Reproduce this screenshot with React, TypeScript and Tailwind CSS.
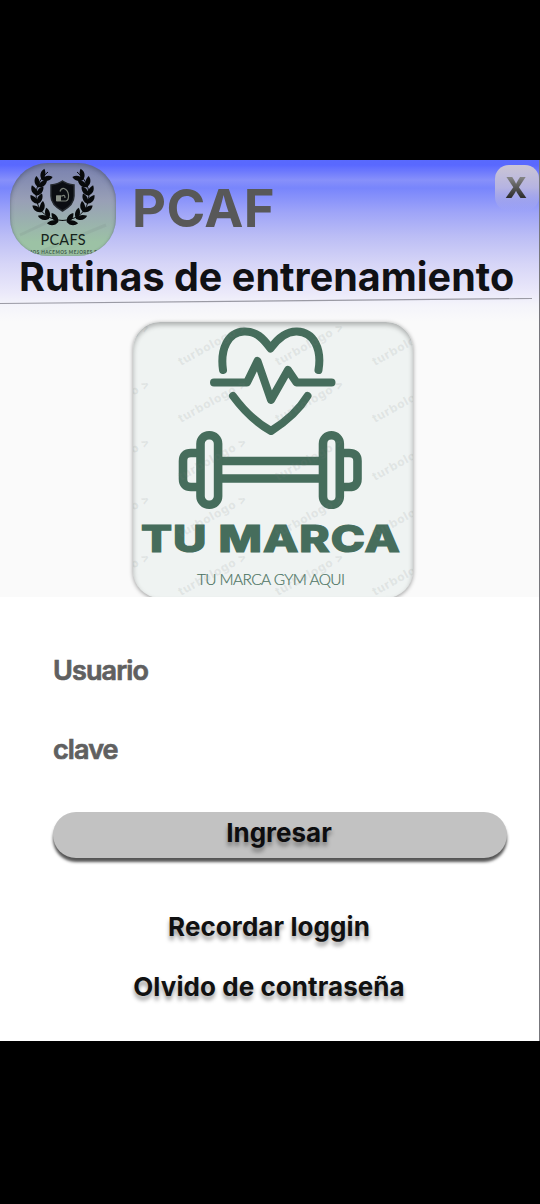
const watermarkColumns = [84, 181, 278, 375];
const watermarkRows = [366, 423, 481, 538, 596];

const leaves = [
  [34.5, 14, 42],
  [29.5, 20.5, 20],
  [27, 28.5, 4],
  [27, 37, -10],
  [30, 45.5, -26],
  [36, 53, -46],
  [44.5, 57.5, -68],
];

function Laurel() {
  return (
    <g fill="#080a0b">
      <path
        d="M38 9 C26 19 24 31 28 42 C32 52 41 57 53 57.500"
        fill="none"
        stroke="#080a0b"
        strokeWidth="1"
      />
      {leaves.map(([x, y, angle]) => (
        <g key={y} transform={`translate(${x} ${y}) rotate(${angle})`}>
          <path d="M0.500 4 C-5 3 -7 -2 -5.500 -6 C-1.500 -4 1 -1 0.500 4Z" />
          <path d="M-0.500 4 C-1 -1 2 -4.500 6 -5.500 C7 -1 4 3.500 -0.500 4Z" />
        </g>
      ))}
    </g>
  );
}

function PcafsLogo() {
  return (
    <div className="ml-[10px] mt-[3px] h-[93px] w-[106px] shrink-0 overflow-hidden rounded-[38px] bg-linear-to-b from-[#777fae] via-[#989fb6] via-40% to-[#9cc2a5] to-85% shadow-[inset_0_3px_4px_rgba(70,80,110,0.45),inset_0_0_2px_rgba(60,70,80,0.35)]">
      <svg viewBox="0 0 106 93" className="h-full w-full">
        <path d="M10 72 L40 58 M30 89 L96 62" stroke="#71827d" strokeOpacity=".15" strokeWidth="3" />
        <Laurel />
        <g transform="translate(105 0) scale(-1 1)">
          <Laurel />
        </g>
        <path
          d="M52.500 18 C49 20.500 45 21.500 41 22 V33 C41 40 47 45 52.500 48 C58 45 64 40 64 33 V22 C60 21.500 56 20.500 52.500 18Z"
          fill="#0b0d12"
          stroke="#25292e"
          strokeWidth="1.500"
        />
        <path
          d="M50 28.500 Q51 25 54 25.500 Q58 27 58.500 32 Q59 37 56 38 H47 V33 H52 Q55 31 55 35"
          fill="none"
          stroke="#7b8178"
          strokeWidth="1.200"
        />
        <path d="M46 32.500H51V38H46Z" fill="#868d84" />
        <text x="30.500" y="81.500" textLength="45" fontFamily="Lato, sans-serif" fontSize="14.500" fill="#15221b">
          PCAFS
        </text>
        <text x="16" y="91" textLength="71" fontFamily="Lato, sans-serif" fontWeight="700" fontSize="4.600" fill="#40594a">
          IMOS HACEMOS MEJORES E
        </text>
      </svg>
    </div>
  );
}

function GymLogo() {
  return (
    <div className="h-[276px] w-[280px] overflow-hidden rounded-[27px] bg-[#eff3f2] shadow-[0_1px_4px_rgba(0,0,0,0.4)]">
      <div className="h-full w-full rounded-[27px] shadow-[inset_0_3px_5px_rgba(0,0,0,0.28)]">
        <svg viewBox="133 322 280 276" className="h-full w-full" fill="none">
          <g stroke="#466d5c" strokeWidth="8" strokeLinecap="round" strokeLinejoin="round">
            <path d="M223 370 C220 349 228 332 244 331.500 C256 331 263 338 270.500 348.500 C278 338 286 331 297 331.500 C314 332 322 349 318.500 370" />
            <path d="M214 382.500 H247 L257.500 361 L271 400 L288 370 L296.500 382.500 H331.500" />
            <path d="M233 396 C244 411 255 422 271 431 C287 421 299 410 307.500 396" />
          </g>
          <g stroke="#466d5c" strokeWidth="8.600">
            <path d="M222 461 H319 M222 478.500 H319" />
            <path d="M200 453 H191 Q183 453 183 461 V479 Q183 487 191 487 H200 M340 453 H349 Q357.500 453 357.500 461 V479 Q357.500 487 349 487 H340" />
            <rect x="200.500" y="435.300" width="17.600" height="69.500" rx="8.500" />
            <rect x="323" y="435.300" width="16.800" height="69.500" rx="8.400" />
          </g>
          <text x="141" y="552" textLength="260" lengthAdjust="spacingAndGlyphs" fontFamily="Inter, sans-serif" fontWeight="800" fontSize="37" letterSpacing=".8" fill="#466d5c" stroke="#466d5c" strokeWidth="1.200">
            TU MARCA
          </text>
          <text x="197" y="584.500" textLength="148" fontFamily="Lato, sans-serif" fontWeight="300" fontSize="15.500" fill="#4d7363" stroke="#4d7363" strokeWidth=".2">
            TU MARCA GYM AQUI
          </text>
          <g fill="#77817d" fillOpacity=".13" fontFamily="Inter, sans-serif" fontWeight="800" fontSize="12">
            {watermarkRows.flatMap((y) =>
              watermarkColumns.map((x) => (
                <text key={`${x}-${y}`} transform={`translate(${x} ${y}) rotate(-29)`} textLength="76">
                  turbologo &gt;
                </text>
              )),
            )}
          </g>
        </svg>
      </div>
    </div>
  );
}

export default function App() {
  return (
    <div className="flex h-[1204px] w-[540px] flex-col overflow-hidden bg-black pt-[160px] font-[Inter,sans-serif]">
      <main className="h-[881px] w-[540px] overflow-hidden border-r border-[#77777c] bg-white">
        <section className="h-[437px] overflow-hidden bg-[linear-gradient(180deg,#596afd_0px,#5968ff_5px,#8790fa_20px,#7885fc_28px,#9ea4f8_52px,#bbbdf5_76px,#d6d5f7_104px,#ebe9fa_133px,#f4f4fa_145px,#fafafa_162px)]">
          <header className="h-[162px]">
            <div className="flex h-[96px] items-start">
              <PcafsLogo />
              <h1 className="ml-[16px] mt-[16px] text-[52.5px] font-bold leading-[64px] tracking-[0.4px] text-[#585858]">PCAF</h1>
              <button className="ml-auto mt-[5px] flex h-[46px] w-[44px] shrink-0 items-center justify-center rounded-[14px] bg-linear-to-b from-[#cbc5d4] via-[#b5b3e2] via-50% to-transparent pr-[2px]">
                <span className="bg-linear-to-b from-[#858585] from-20% to-[#303030] to-75% bg-clip-text text-[29px] font-extrabold leading-[36px] text-transparent">X</span>
              </button>
            </div>
            <h2 className="-mt-[3px] ml-[19px] h-[45px] whitespace-nowrap text-[39.5px] font-bold leading-[48px] tracking-[0.03px] text-[#101114]">
              Rutinas de entrenamiento
            </h2>
            <svg viewBox="0 0 540 8" className="h-[8px] w-full">
              <path d="M0 5.500 L533 .5" stroke="#9a9aa4" strokeWidth="1.200" />
            </svg>
          </header>
          <div className="flex justify-center pl-[6px]">
            <GymLogo />
          </div>
        </section>
        <form className="flex flex-col px-[53px] pt-[57px]" onSubmit={(event) => event.preventDefault()}>
          <label className="h-[79px] text-[27px] font-semibold leading-[34px] tracking-[-0.9px] text-[#606060] [-webkit-text-stroke:0.7px_#606060]">Usuario</label>
          <label className="h-[79px] text-[27px] font-semibold leading-[34px] tracking-[-0.9px] text-[#606060] [-webkit-text-stroke:0.7px_#606060]">clave</label>
          <button className="h-[46px] w-[454px] rounded-full bg-[#c2c2c2] pb-[5px] pr-[2px] text-[26px] font-bold leading-[40px] text-[#0d0d0f] shadow-[0_4px_3px_#555]">
            <span className="[text-shadow:0_4px_4px_rgba(0,0,0,0.4)]">Ingresar</span>
          </button>
          <div className="mt-[53px] flex flex-col items-center gap-[28px] pr-[1px] text-[26px] font-bold leading-[32px] tracking-[0.07px] text-[#111] [text-shadow:0_4px_4px_rgba(0,0,0,0.4)]">
            <a className="whitespace-nowrap">Recordar loggin</a>
            <a className="whitespace-nowrap">Olvido de contraseña</a>
          </div>
        </form>
      </main>
    </div>
  );
}
